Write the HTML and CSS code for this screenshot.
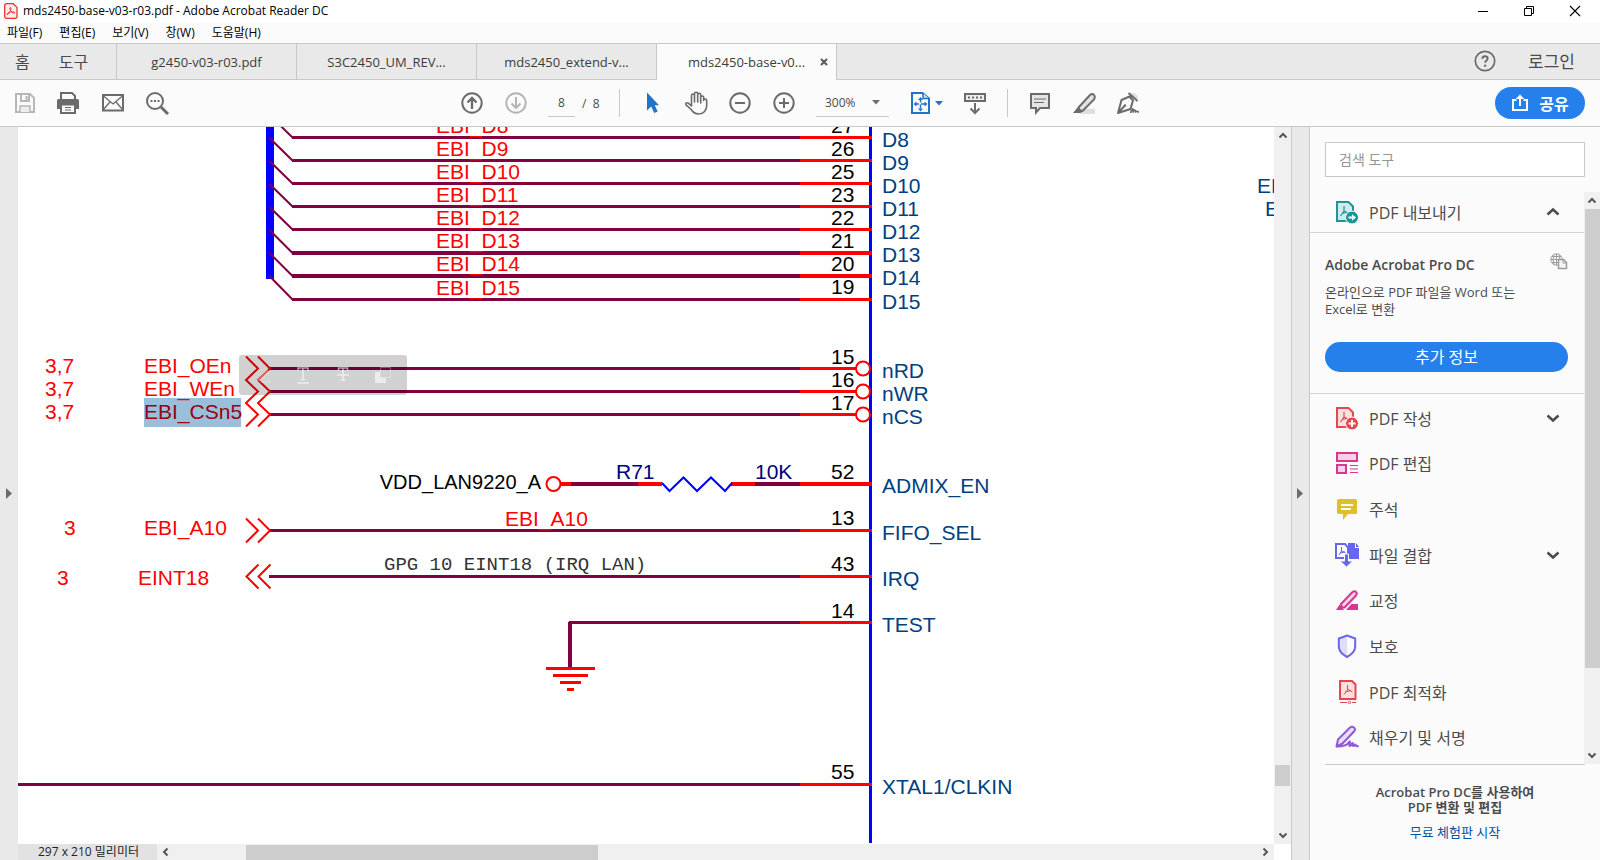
FILE: index.html
```html
<!DOCTYPE html>
<html lang="ko">
<head>
<meta charset="utf-8">
<title>mds2450-base-v03-r03.pdf - Adobe Acrobat Reader DC</title>
<link rel="stylesheet" href="styles.css">
</head>
<body>
<header class="titlebar">
  <svg class="app-icon" width="14" height="16" viewBox="0 0 14 16" fill="none" stroke="#e2352c"><path d="M2.5.7h6.8l3.7 3.7v9.1a1.8 1.8 0 0 1-1.8 1.8H2.5A1.8 1.8 0 0 1 .7 13.500V2.500A1.800 1.800 0 0 1 2.500.7z" stroke-width="1.300" fill="#fdeceb"/><path d="M6.300 4.500c1.200 0 .6 2.300-.3 4-.9 1.800-2.200 3.600-2.900 3-.7-.8 1.400-2 3.500-2.400 2-.4 4.300-.3 4.200.6-.2 1-2.200.3-3.400-1-1.200-1.400-2-4.200-1.100-4.200z" stroke-width="1"/></svg>
  <span class="title-text">mds2450-base-v03-r03.pdf - Adobe Acrobat Reader DC</span>
  <div class="window-buttons">
    <button aria-label="최소화"><svg width="12" height="12" viewBox="0 0 12 12"><path d="M1 6.500h10" stroke="#000"/></svg></button>
    <button aria-label="이전 크기로"><svg width="12" height="12" viewBox="0 0 12 12" fill="none" stroke="#000"><path d="M1.500 3.500h7v7h-7zM3.500 3.500v-2h7v7h-2"/></svg></button>
    <button aria-label="닫기"><svg width="12" height="12" viewBox="0 0 12 12"><path d="M1 1l10 10M11 1L1 11" stroke="#000" stroke-width="1.100"/></svg></button>
  </div>
</header>

<nav class="menubar" aria-label="메뉴">
  <button>파일(F)</button><button>편집(E)</button><button>보기(V)</button><button>창(W)</button><button>도움말(H)</button>
</nav>

<nav class="tabbar" aria-label="문서 탭">
  <div class="home-links"><button>홈</button><button>도구</button></div>
  <button class="tab">g2450-v03-r03.pdf</button>
  <button class="tab">S3C2450_UM_REV...</button>
  <button class="tab">mds2450_extend-v...</button>
  <div class="tab active"><span>mds2450-base-v0...</span><button class="tab-close" aria-label="탭 닫기"><svg width="8" height="8" viewBox="0 0 8 8"><path d="M1 1l6 6M7 1L1 7" stroke="#5a5a5a" stroke-width="2"/></svg></button></div>
  <div class="account">
    <button aria-label="도움말"><svg width="22" height="22" viewBox="0 0 22 22" fill="none" stroke="#6b6b6b"><circle cx="11" cy="11" r="9.700" stroke-width="1.700"/><path d="M8.400 8.800c0-1.700 1.100-2.500 2.600-2.500s2.600.9 2.600 2.300c0 1.900-2.400 2-2.400 4.100" stroke-width="2"/><path d="M10 14.700h2.200v2H10z" fill="#6b6b6b" stroke="none"/></svg></button>
    <button class="login">로그인</button>
  </div>
</nav>

<div class="toolbar" role="toolbar" aria-label="도구 모음">
  <div class="tools-left">
    <button aria-label="저장"><svg width="24" height="24" viewBox="0 0 24 24" fill="none" stroke="#b7b7b7" stroke-width="2"><path d="M3 3h14l4 4v14H3z"/><path d="M8 3v7h8V3"/><path d="M12.500 5h2v4h-2z" fill="#b7b7b7" stroke="none"/><path d="M7 21v-6h10v6" fill="#eee" stroke-width="1.500"/></svg></button>
    <button aria-label="인쇄"><svg width="24" height="24" viewBox="0 0 24 24"><path d="M0 9.500A1.500 1.500 0 0 1 1.500 8h19A1.500 1.500 0 0 1 22 9.500V18H0z" fill="#6b6b6b"/><path d="M4 8V2h11l3 3v3M4 13.500h14V22H4z" fill="#fafafa" stroke="#6b6b6b" stroke-width="2"/><path d="M8 16.500h6M8 19h6" stroke="#6b6b6b"/><path d="M3 11h16" stroke="#6b6b6b" stroke-width="3"/></svg></button>
    <button aria-label="메일"><svg width="24" height="24" viewBox="0 0 24 24" fill="none" stroke="#6b6b6b"><path d="M2 4h20v15.500H2z" stroke-width="2"/><path d="M2 4.500l10 8.500 10-8.500M2 19l7-8M22 19l-7-8" stroke-width="1.300"/></svg></button>
    <button aria-label="찾기"><svg width="24" height="24" viewBox="0 0 24 24" fill="none" stroke="#6b6b6b"><circle cx="10" cy="10" r="8" stroke-width="2"/><path d="M16 16l7 7" stroke-width="3"/><path d="M5.500 10h2M9 10h2M12.500 10h2" stroke-width="2"/></svg></button>
  </div>
  <div class="tools-center">
    <button aria-label="이전 페이지"><svg width="24" height="24" viewBox="0 0 24 24" fill="none" stroke="#6b6b6b" stroke-width="2"><circle cx="12" cy="12" r="9.700"/><path d="M12 18V7M7.500 11.500L12 7l4.500 4.500" stroke-width="2.300"/></svg></button>
    <button aria-label="다음 페이지"><svg width="24" height="24" viewBox="0 0 24 24" fill="none" stroke="#b5b5b5" stroke-width="2"><circle cx="12" cy="12" r="9.700"/><path d="M12 6v11M7.500 12.500L12 17l4.500-4.500"/></svg></button>
    <div class="pager"><input type="text" value="8" aria-label="페이지 번호"><span>/&nbsp; 8</span></div>
    <i class="divider"></i>
    <button aria-label="선택 도구"><svg width="24" height="24" viewBox="0 0 24 24"><path d="M7 1.500v18l4.200-4 3 6.500 3.500-1.500-3-6.300H19z" fill="#1f73c9"/></svg></button>
    <button aria-label="손 도구"><svg width="24" height="24" viewBox="0 0 24 24" fill="none" stroke="#6b6b6b" stroke-width="1.600" stroke-linecap="round" stroke-linejoin="round"><path d="M7.500 13V4.500a1.500 1.500 0 0 1 3 0V11V2.800a1.600 1.600 0 0 1 3.200 0V11V3.700a1.500 1.500 0 0 1 3 0V12V6.500a1.500 1.500 0 0 1 3 0V9.500a1.500 1.500 0 0 1 3 0v4.700c0 5-3 8.800-8 8.800-3.600 0-5.700-1.500-7.500-4.500L2 13.800c-.8-1.500 1-2.700 2.300-1.700L7.500 15z"/></svg></button>
    <button aria-label="축소"><svg width="24" height="24" viewBox="0 0 24 24" fill="none" stroke="#6b6b6b" stroke-width="2"><circle cx="12" cy="12" r="9.700"/><path d="M7 12h10"/></svg></button>
    <button aria-label="확대"><svg width="24" height="24" viewBox="0 0 24 24" fill="none" stroke="#6b6b6b" stroke-width="2"><circle cx="12" cy="12" r="9.700"/><path d="M7 12h10M12 7v10"/></svg></button>
    <label class="zoom-box"><select aria-label="확대 비율"><option>300%</option></select><svg width="8" height="5" viewBox="0 0 8 5"><path d="M0 0h8L4 4.500z" fill="#6b6b6b"/></svg></label>
    <button class="fit" aria-label="페이지 맞춤"><svg width="22" height="24" viewBox="0 0 22 24" fill="none" stroke="#1f73c9"><path d="M3 2h10.500L20 7.500V22H3z" stroke-width="2"/><path d="M14 2v5.500h6" fill="#cfe2f5" stroke-width="1.500"/><path d="M11.500 7.500v11M6 13h11" stroke-dasharray="4 2" stroke-width="1.500"/><path d="M9 9l2.500-3L14 9zM9 17.500l2.500 3 2.500-3zM7.500 10.500L4.500 13l3 2.500zM15.500 10.500l3 2.500-3 2.500z" fill="#1f73c9" stroke="none"/></svg><svg width="8" height="5" viewBox="0 0 8 5"><path d="M0 0h8L4 4.500z" fill="#1f73c9"/></svg></button>
    <button aria-label="읽기 모드"><svg width="24" height="24" viewBox="0 0 24 24" fill="none" stroke="#6b6b6b" stroke-width="2"><rect x="2" y="3" width="20" height="7" fill="#eee"/><path d="M5 6.500h14" stroke-dasharray="2 2"/><path d="M12 12v10M7.500 17.500L12 22l4.500-4.500"/></svg></button>
    <i class="divider"></i>
    <button aria-label="메모"><svg width="24" height="24" viewBox="0 0 24 24" fill="#e4e4e4" stroke="#6b6b6b" stroke-width="2"><path d="M3 3h18v14h-9l-4 4.500V17H3z"/><path d="M6 8h12M6 11.500h10" stroke-width="1.200"/></svg></button>
    <button aria-label="강조"><svg width="24" height="24" viewBox="0 0 24 24"><path d="M12 18h11v5H7z" fill="#dedede"/><path d="M6.500 16.500L18 4q2.500-2 4 0t0 4.500L10.500 20q-3 .5-4-3.500z" fill="#e4e4e4" stroke="#6b6b6b" stroke-width="2"/><path d="M5.500 16.500l5 4.500-2.500 1H1z" fill="#6b6b6b"/></svg></button>
    <button aria-label="서명"><svg width="24" height="24" viewBox="0 0 24 24" fill="none" stroke="#6b6b6b" stroke-width="2" stroke-linejoin="round"><path d="M14 2l7 7 1-4-5-3z" fill="#dedede" stroke="none"/><path d="M12.500 2l9 8M13.500 5.500l-8 3.500L2 22l12.500-4L17 9.500zM2 22l6.500-7"/><circle cx="9" cy="14.500" r="1.200" fill="#6b6b6b" stroke="none"/><path d="M14.500 22c2-6 3-5 2.500-1 1.500-3 2.500-2 2.500 0 1-1.500 1.500 0 3.500 0" stroke-width="1.700"/></svg></button>
  </div>
  <div class="tools-right">
    <button class="share"><svg width="18" height="18" viewBox="0 0 18 18" fill="none" stroke="#fff" stroke-width="2"><path d="M5.500 6H2v10h14V6h-3.500M9 12V3"/><path d="M4.700 5L9 .5 13.300 5z" fill="#fff" stroke="none"/></svg>공유</button>
  </div>
</div>

<main class="workspace">
  <button class="rail" aria-label="탐색 창 열기"><svg width="6" height="11" viewBox="0 0 6 11"><path d="M0 0l6 5.500L0 11z" fill="#6b6b6b"/></svg></button>

  <section class="viewer" aria-label="문서">
    <div class="canvas">
      <svg class="schematic" width="1257" height="717" viewBox="18 127 1257 717">
        <path class="bus" d="M270 120v159"/>
        <path class="chip" d="M870.500 120v723"/>
        <g class="net thin">
          <path d="M269.500 115l23 22.500M269.500 138l23 22.500M269.500 161l23 22.500M269.500 184l23 22.500M269.500 207l23 22.500M269.500 230l23 23M269.500 253l23 23M269.500 276l23 23.500"/>
        </g>
        <g class="net">
          <path d="M292 137.500h508M292 160.500h508M292 183.500h508M292 206.500h508M292 229.500h508M292 299.500h508M270 368.500h530M270 391.500h530M270 414.500h530M270 530.500h530M269 576.500h531M569 622.500h231M18 784.500h782"/>
          <path class="wide" d="M292 253h508M292 276h508M571 484h67M755 484h45M570 622v46"/>
        </g>
        <g class="pin">
          <path d="M800 137.500h72M800 160.500h72M800 183.500h72M800 206.500h72M800 229.500h72M800 299.500h72M800 368.500h57M800 391.500h57M800 414.500h57M800 530.500h72M800 576.500h72M800 622.500h72M800 784.500h72"/>
          <path class="wide" d="M800 253h72M800 276h72M560 484h11M638 484h24M731 484h24M800 484h72"/>
          <path d="M546 668.500h49M553 675.500h35M560 682.500h21M567 689.500h7"/>
        </g>
        <g class="port">
          <circle cx="863" cy="368.500" r="7"/><circle cx="863" cy="391.500" r="7"/><circle cx="863" cy="414.500" r="7"/><circle cx="553.500" cy="484" r="7"/>
          <path d="M246 356.500l12 12-12 11.500 12 11.500-12 11.500 12 11.500-12 12M258 356.500l12 12-12 11.500 12 11.500-12 11.500 12 11.500-12 12"/>
          <path d="M246 518.500l12 12-12 12M258 518.500l12 12-12 12M258.500 564.500l-12 12 12 12M270.500 564.500l-12 12 12 12"/>
        </g>
        <path class="resistor" d="M662 483l7.500 8 14-13.500 13.500 13.500 14-13.500 14 13.500 7-8"/>
        <rect class="selection" x="144" y="398" width="97" height="29"/>
        <g class="t-net">
          <text x="436" y="133">EBI_D8</text><text x="436" y="156">EBI_D9</text><text x="436" y="179">EBI_D10</text><text x="436" y="202">EBI_D11</text><text x="436" y="225">EBI_D12</text><text x="436" y="248">EBI_D13</text><text x="436" y="271">EBI_D14</text><text x="436" y="295">EBI_D15</text>
          <text x="45" y="373">3,7</text><text x="45" y="396">3,7</text><text x="45" y="419">3,7</text>
          <text x="144" y="373">EBI_OEn</text><text x="144" y="396">EBI_WEn</text><text class="selected" x="144" y="419">EBI_CSn5</text>
          <text x="505" y="526">EBI_A10</text>
          <text x="64" y="535">3</text><text x="144" y="535">EBI_A10</text>
          <text x="57" y="585">3</text><text x="138" y="585">EINT18</text>
        </g>
        <g class="t-pin">
          <text x="831" y="133">27</text><text x="831" y="156">26</text><text x="831" y="179">25</text><text x="831" y="202">23</text><text x="831" y="225">22</text><text x="831" y="248">21</text><text x="831" y="271">20</text><text x="831" y="294">19</text>
          <text x="831" y="364">15</text><text x="831" y="387">16</text><text x="831" y="410">17</text>
          <text x="831" y="479">52</text><text x="831" y="525">13</text><text x="831" y="571">43</text><text x="831" y="618">14</text><text x="831" y="779">55</text>
          <text class="t-power" x="541" y="489">VDD_LAN9220_A</text>
        </g>
        <g class="t-part"><text x="616" y="479">R71</text><text x="755" y="479">10K</text></g>
        <g class="t-name">
          <text x="882" y="147">D8</text><text x="882" y="170">D9</text><text x="882" y="193">D10</text><text x="882" y="216">D11</text><text x="882" y="239">D12</text><text x="882" y="262">D13</text><text x="882" y="285">D14</text><text x="882" y="309">D15</text>
          <text x="882" y="378">nRD</text><text x="882" y="401">nWR</text><text x="882" y="424">nCS</text>
          <text x="882" y="493">ADMIX_EN</text><text x="882" y="540">FIFO_SEL</text><text x="882" y="586">IRQ</text><text x="882" y="632">TEST</text><text x="882" y="794">XTAL1/CLKIN</text>
          <text x="1257" y="193">EBI</text><text x="1265" y="216">EBI</text>
        </g>
        <text class="t-note" x="384" y="570">GPG 10 EINT18 (IRQ LAN)</text>
      </svg>
      <div class="mini-toolbar">
        <button aria-label="텍스트 강조"><svg width="18" height="18" viewBox="0 0 18 18"><path d="M2 15L13 3l3 3L6 15z" fill="#fff" opacity=".6"/><path d="M6 15h11v2H6z" fill="#fff" opacity=".3"/></svg></button>
        <button aria-label="밑줄"><svg width="18" height="18" viewBox="0 0 18 18" fill="none" stroke="#fff" stroke-width="1.500"><path d="M4 4.500V2h10v2.500M9 2v12M6.500 13.500h5M3 17h12"/></svg></button>
        <button aria-label="취소선"><svg width="18" height="18" viewBox="0 0 18 18" fill="none" stroke="#fff" stroke-width="1.500"><path d="M4.500 4.500V2h9v2.500M9 2v12M6.500 14h5M3 9h12"/></svg></button>
        <button aria-label="복사"><svg width="18" height="18" viewBox="0 0 18 18"><path d="M1 6h5v6h6v5H1z" fill="#fff"/><path d="M6.500 1.500h10v10h-10z" fill="none" stroke="#fff" stroke-dasharray="1 1"/></svg></button>
      </div>
    </div>
    <div class="scroll-v" aria-hidden="true">
      <svg width="10" height="7" viewBox="0 0 10 7"><path d="M1.500 5.500L5 2l3.500 3.500" fill="none" stroke="#555" stroke-width="2"/></svg>
      <i class="thumb"></i>
      <svg width="10" height="7" viewBox="0 0 10 7"><path d="M1.500 1.500L5 5l3.500-3.500" fill="none" stroke="#555" stroke-width="2"/></svg>
    </div>
    <div class="bottom-row">
      <span class="page-size">297 x 210 밀리미터</span>
      <div class="scroll-h" aria-hidden="true">
        <svg width="7" height="10" viewBox="0 0 7 10"><path d="M5.500 1.500L2 5l3.500 3.500" fill="none" stroke="#555" stroke-width="2"/></svg>
        <i class="thumb"></i>
        <svg width="7" height="10" viewBox="0 0 7 10"><path d="M1.500 1.500L5 5 1.500 8.500" fill="none" stroke="#555" stroke-width="2"/></svg>
      </div>
    </div>
  </section>

  <button class="rail rail-right" aria-label="도구 창 닫기"><svg width="6" height="11" viewBox="0 0 6 11"><path d="M0 0l6 5.500L0 11z" fill="#6b6b6b"/></svg></button>

  <aside class="panel">
    <input class="tool-search" type="search" placeholder="검색 도구" aria-label="검색 도구">
    <div class="panel-body">
      <div class="panel-content">
        <button class="tool export">
          <svg width="24" height="24" viewBox="0 0 24 24" fill="none" stroke="#1a9599"><path d="M2 2h11.500L18 6.500V21H2z" fill="#d1eaea" stroke-width="2"/><path d="M9 6v5l-3.500 5M9 11l5 2.500M7 13.500l5-1" stroke-width="1.200"/><circle cx="17" cy="17.500" r="6.500" fill="#1a9599" stroke="#fbfbfb"/><path d="M13.500 16.500H17v-2.300l4 3.300-4 3.300v-2.300h-3.500z" fill="#fff" stroke="none"/></svg>
          <span>PDF 내보내기</span>
          <svg width="14" height="10" viewBox="0 0 14 10"><path d="M1.500 7.500L7 2.500l5.500 5" fill="none" stroke="#4b4b4b" stroke-width="2.500"/></svg>
        </button>
        <section class="promo">
          <div class="promo-head"><h2>Adobe Acrobat Pro DC</h2><svg width="18" height="17" viewBox="0 0 18 17" fill="none" stroke="#9c9c9c"><circle cx="6.500" cy="6.500" r="5.700"/><path d="M1 6.500h11M2 3.500h9M2 9.500h7M6.500 1v11M4 1.500q-2 5 0 10M9 1.500q2 5 0 10"/><path d="M8.500 6.500h5l3 3v6h-8z" fill="#f5f5f5" stroke-width="1.500"/><path d="M13 6.500v3.500h3.500"/></svg></div>
          <p>온라인으로 PDF 파일을 Word 또는<br>Excel로 변환</p>
          <button class="more">추가 정보</button>
        </section>
        <div class="tool-list">
          <button class="tool"><svg width="24" height="24" viewBox="0 0 24 24" fill="none" stroke="#e34850"><path d="M2 2h11.500L18 6.500V21H2z" fill="#fae0e1" stroke-width="2"/><path d="M9 6v5l-3.500 5M9 11l5 2.500M7 13.500l5-1" stroke-width="1.200"/><circle cx="17" cy="17.500" r="6.500" fill="#e34850" stroke="#fbfbfb"/><path d="M17 14v7M13.500 17.500h7" stroke="#fff" stroke-width="2"/></svg><span>PDF 작성</span><svg width="14" height="10" viewBox="0 0 14 10"><path d="M1.500 2.500L7 7.500l5.500-5" fill="none" stroke="#4b4b4b" stroke-width="2.500"/></svg></button>
          <button class="tool"><svg width="24" height="24" viewBox="0 0 24 24" fill="#f6d2e8" stroke="#d83790" stroke-width="2"><path d="M2 2h20v8H2zM2 14h9v8H2z"/><path d="M15 14.500h8M15 18h8M15 21.500h8" stroke-width="1.200"/></svg><span>PDF 편집</span></button>
          <button class="tool"><svg width="24" height="24" viewBox="0 0 24 24"><path d="M3.500 2h17A1.500 1.500 0 0 1 22 3.500v12a1.500 1.500 0 0 1-1.500 1.500H13l-5 6v-6H3.500A1.500 1.500 0 0 1 2 15.500v-12A1.500 1.500 0 0 1 3.500 2z" fill="#dfbf2a"/><path d="M6 8h12M6 12h10" stroke="#fff" stroke-width="2"/></svg><span>주석</span></button>
          <button class="tool"><svg width="24" height="24" viewBox="0 0 24 24" fill="none" stroke="#6767ec"><path d="M13 0h7v5h4v11H13z" fill="#6767ec" stroke="none"/><path d="M21 0l3 4h-3z" fill="#6767ec" stroke="none"/><path d="M1 1h9l3 3.500V15H1z" fill="#fff" stroke-width="2"/><path d="M6.500 4v4l-2.500 4M6.500 8l4 1.500M5 10l5-1"/><path d="M9.500 11h4v7H18l-6.500 6L5 18h4.500z" fill="#6767ec" stroke="#fbfbfb"/></svg><span>파일 결합</span><svg width="14" height="10" viewBox="0 0 14 10"><path d="M1.500 2.500L7 7.500l5.500-5" fill="none" stroke="#4b4b4b" stroke-width="2.500"/></svg></button>
          <button class="tool"><svg width="24" height="24" viewBox="0 0 24 24"><path d="M16.500 16H23v6H11z" fill="#d83790"/><path d="M6 16L17.500 4q2-1.500 3.500 0t0 3.500L9.500 19.500q-3 .5-3.500-3.500z" fill="#f6d2e8" stroke="#d83790" stroke-width="2"/><path d="M4.500 16.500l4.500 5-1 .5H1z" fill="#d83790"/></svg><span>교정</span></button>
          <button class="tool"><svg width="24" height="24" viewBox="0 0 24 24"><path d="M12 2L4 4.500v8q0 6 8 10z" fill="#dedef9"/><path d="M12 1.500l8.200 3v8q0 6-8.200 10.500-8.200-4.500-8.200-10.500v-8z" fill="none" stroke="#6767ec" stroke-width="2"/></svg><span>보호</span></button>
          <button class="tool"><svg width="24" height="24" viewBox="0 0 24 24" fill="none" stroke="#e34850"><path d="M5 1h12l3.500 3.500V19H5z" fill="#fae0e1" stroke-width="2"/><path d="M12.500 5v5L9 14.500M12.500 9l5 3M10 12l6-1.500M5 22.500h7M17 22.500h4"/><circle cx="14.500" cy="22.500" r="1.200"/></svg><span>PDF 최적화</span></button>
          <button class="tool"><svg width="24" height="24" viewBox="0 0 24 24" fill="none" stroke="#9256d9" stroke-width="2" stroke-linejoin="round"><path d="M1.500 21.500L3 14.500 15 2.500q2-1.500 4 0t0 4L7.500 18.500z" fill="#e9ddf7"/><path d="M1.500 21.500c7 0 11-1 12.500-4.500 2-2 0 3.500.5 4 2 0 2-2.500 3-3 1 0-.5 3 1 3 1 0 1-1.500 2-1.500 0 2 2 2 3 1"/></svg><span>채우기 및 서명</span></button>
        </div>
      </div>
      <div class="scroll-v panel-scroll" aria-hidden="true">
        <svg width="10" height="7" viewBox="0 0 10 7"><path d="M1.500 5.500L5 2l3.500 3.500" fill="none" stroke="#555" stroke-width="2"/></svg>
        <i class="thumb"></i>
        <svg width="10" height="7" viewBox="0 0 10 7"><path d="M1.500 1.500L5 5l3.500-3.500" fill="none" stroke="#555" stroke-width="2"/></svg>
      </div>
    </div>
    <footer class="trial">
      <p>Acrobat Pro DC를 사용하여<br>PDF 변환 및 편집</p>
      <a href="#">무료 체험판 시작</a>
    </footer>
  </aside>
</main>
</body>
</html>
```

FILE: styles.css
```css
* { box-sizing: border-box; }

body {
  margin: 0;
  height: 100vh;
  display: flex;
  flex-direction: column;
  overflow: hidden;
  background: #fbfbfb;
  color: #4b4b4b;
  font-family: "Open Sans", "Noto Sans CJK KR", sans-serif;
  font-size: 12px;
}

button, input, select {
  font: inherit;
  color: inherit;
  background: none;
  border: 0;
  padding: 0;
  margin: 0;
}

button { display: flex; align-items: center; justify-content: center; }
svg { display: block; flex: none; }
h2, p { margin: 0; }

/* Title and menu */
.titlebar {
  display: flex;
  align-items: center;
  flex: none;
  height: 23px;
  padding: 0 0 2px 4px;
  background: #fff;
  color: #000;
}
.title-text { margin-left: 5px; }
.window-buttons { display: flex; margin-left: auto; padding-right: 2px; }
.window-buttons button { width: 46px; height: 20px; }

.menubar {
  display: flex;
  flex: none;
  gap: 17px;
  height: 20px;
  padding: 0 0 2px 7px;
  background: #fafafa;
  color: #000;
}

/* Tabs */
.tabbar {
  display: flex;
  flex: none;
  height: 37px;
  background: #e9e9e9;
  border-top: 1px solid #c8c8c8;
  border-bottom: 1px solid #c8c8c8;
}
.home-links {
  display: flex;
  gap: 29px;
  width: 116px;
  padding: 0 0 2px 15px;
  font-size: 16px;
}
.tab {
  position: relative;
  display: flex;
  align-items: center;
  justify-content: center;
  width: 180px;
  border-left: 1px solid #c8c8c8;
  font-size: 13px;
  color: #3c3c3c;
}
.tab.active {
  width: 181px;
  margin-bottom: -1px;
  background: #fbfbfb;
  border-right: 1px solid #c8c8c8;
}
.tab-close { position: absolute; right: 8px; top: 14px; }
.account { display: flex; gap: 32px; margin-left: auto; padding: 0 25px 2px 0; }
.login { font-size: 17px; }

/* Toolbar */
.toolbar {
  display: grid;
  grid-template-columns: 1fr auto 1fr;
  align-items: center;
  flex: none;
  height: 47px;
  border-bottom: 1px solid #c8c8c8;
}
.tools-left { display: flex; gap: 20px; padding-left: 13px; }
.tools-center { display: flex; align-items: center; gap: 20px; }
.tools-right { display: flex; justify-content: flex-end; padding-right: 15px; }
.pager { display: flex; align-items: center; gap: 7px; width: 51px; white-space: nowrap; }
.pager input {
  width: 27px;
  height: 27px;
  text-align: center;
  border-bottom: 1px solid #c8c8c8;
}
.divider { width: 1px; height: 28px; background: #c8c8c8; }
.zoom-box {
  display: flex;
  align-items: center;
  width: 73px;
  height: 27px;
  padding: 0 9px;
  border-bottom: 1px solid #c8c8c8;
}
.zoom-box select { flex: 1; appearance: none; }
.fit { gap: 4px; }
.share {
  gap: 10px;
  width: 90px;
  height: 32px;
  border-radius: 16px;
  background: #2680eb;
  color: #fff;
  font-size: 16px;
  font-weight: 600;
}

/* Workspace */
.workspace {
  display: grid;
  grid-template-columns: 18px minmax(0, 1fr) 19px 290px;
  flex: 1;
  min-height: 0;
}
.rail { background: #e9e9e9; }
.rail-right { padding-right: 2px; border-left: 1px solid #c8c8c8; border-right: 1px solid #c8c8c8; }

.viewer {
  display: grid;
  grid-template: minmax(0, 1fr) 16px / minmax(0, 1fr) 17px;
  background: #fff;
}
.canvas { position: relative; overflow: hidden; }
.scroll-v {
  display: flex;
  flex-direction: column;
  align-items: center;
  justify-content: space-between;
  padding: 5px 0;
  background: #f0f0f0;
}
.thumb { background: #cdcdcd; }
.scroll-v .thumb { width: 15px; height: 21px; margin: auto 0 46px; }
.bottom-row { display: flex; }
.page-size {
  width: 139px;
  padding-left: 20px;
  background: #e2e2e2;
  color: #222;
  line-height: 15px;
}
.scroll-h {
  display: flex;
  align-items: center;
  flex: 1;
  padding: 0 5px;
  background: #f0f0f0;
}
.scroll-h .thumb { width: 352px; height: 15px; margin: 0 auto 0 77px; }

/* Schematic page */
.schematic { fill: none; font-family: "Liberation Sans", Arial, sans-serif; font-size: 21px; }
.bus { stroke: #00f; stroke-width: 8; }
.chip { stroke: #00f; stroke-width: 3; }
.net { stroke: #800040; stroke-width: 3; }
.net.thin { stroke-width: 2; }
.pin { stroke: #f00; stroke-width: 3; }
.wide { stroke-width: 4; }
.port { stroke: #f00; stroke-width: 2; }
.port circle { fill: #fff; }
.resistor { stroke: #00f; stroke-width: 2; }
.selection { fill: #9abfdb; }
.t-net { fill: #f00; }
.selected { fill: #990010; }
.t-pin { fill: #000; }
.t-power { font-size: 20px; text-anchor: end; }
.t-part { fill: #000080; }
.t-name { fill: #004080; }
.t-note { fill: #333; font-family: "Liberation Mono", "Courier New", monospace; font-size: 19px; }

.mini-toolbar {
  position: absolute;
  left: 221px;
  top: 228px;
  display: flex;
  align-items: center;
  gap: 22px;
  width: 168px;
  height: 40px;
  padding: 0 15px;
  border-radius: 3px;
  background: rgb(0 0 0 / 18%);
}
.mini-toolbar svg { opacity: 0.6; }

/* Tools panel */
.panel { display: flex; flex-direction: column; min-height: 0; }
.tool-search {
  flex: none;
  height: 35px;
  margin: 15px 15px 0;
  padding: 0 13px;
  border: 1px solid #c8c8c8;
  background: #fff;
  font-size: 14px;
}
.tool-search::placeholder { color: #959595; }
.panel-body { display: flex; flex: 1; min-height: 0; margin-top: 15px; }
.panel-content { display: flex; flex-direction: column; flex: 1; }
.tool {
  justify-content: flex-start;
  gap: 10px;
  width: 100%;
  padding: 0 24px 0 25px;
  font-size: 16px;
}
.tool span { flex: 1; text-align: left; }
.export { flex: none; height: 41px; border-bottom: 1px solid #d3d3d3; }
.promo {
  padding: 20px 16px 21px 15px;
  border-bottom: 1px solid #d3d3d3;
  font-size: 13px;
  line-height: 17px;
}
.promo-head { display: flex; justify-content: space-between; height: 31px; }
.promo h2 { font-size: 14px; line-height: 24px; font-weight: 600; }
.promo p { margin-bottom: 24px; }
.more {
  width: 100%;
  height: 30px;
  border-radius: 15px;
  background: #2680eb;
  color: #fff;
  font-size: 16px;
}
.tool-list { display: grid; grid-auto-rows: 1fr; flex: 1; padding: 1px 0 4px; }
.panel-scroll { flex: none; width: 16px; }
.panel-scroll .thumb { height: 459px; margin: 5px 0 auto; }
.trial {
  flex: none;
  height: 96px;
  margin: 0 15px;
  padding-top: 20px;
  border-top: 1px solid #c8c8c8;
  text-align: center;
  font-size: 13px;
  line-height: 15px;
}
.trial p { margin-bottom: 10px; font-weight: 600; }
.trial a { color: #0054a6; text-decoration: none; }
```
